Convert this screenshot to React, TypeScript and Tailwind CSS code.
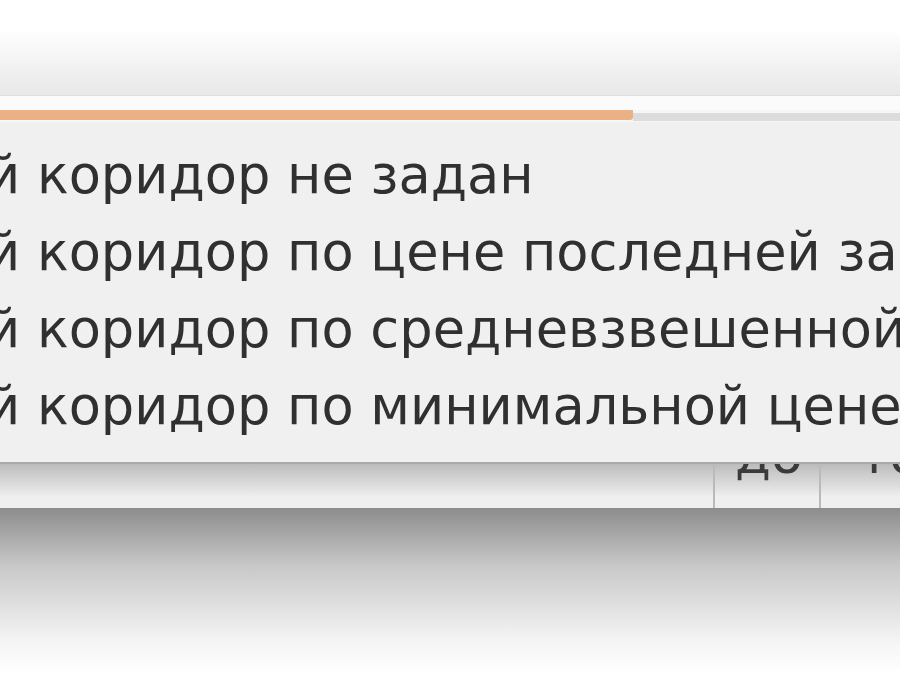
const items = [
  'й коридор не задан',
  'й коридор по цене последней за',
  'й коридор по средневзвешенной',
  'й коридор по минимальной цене',
]

function MenuRow({ label }: { label: string }) {
  return (
    <div className="h-[77px] flex items-center whitespace-nowrap">
      <span className="-ml-[14px] text-[52.6px] leading-[77px] text-[#303030] blur-[0.5px]">{label}</span>
    </div>
  )
}

export default function App() {
  return (
    <div
      className="w-[900px] h-[700px] overflow-hidden bg-white flex flex-col"
      style={{ fontFamily: '"DejaVu Sans", "Liberation Sans", sans-serif' }}
    >
      {/* window toolbar area above the combo */}
      <div className="h-[95px] bg-[linear-gradient(to_bottom,#ffffff_30%,#e8e8e8)]" />
      <div className="h-px bg-[#dedede]" />
      <div className="h-[14px] bg-[#fbfbfb]" />

      {/* combo box focus edge */}
      <div className="h-[12px] flex bg-[#f6f6f6]">
        <div className="w-[633px] h-[10px] bg-[#e9b185] rounded-br-[3px]" />
        <div className="flex-1 mt-[3px] h-[8px] bg-[#dcdcdc]" />
      </div>

      {/* popup menu */}
      <div className="h-[340px] bg-[#f0f0f0] pt-[14px] overflow-hidden">
        {items.map(label => (
          <MenuRow key={label} label={label} />
        ))}
      </div>
      <div className="h-[2px] bg-[#a9a9a9]" />

      {/* table row under the menu, in its shadow */}
      <div className="h-[44px] flex bg-[linear-gradient(to_bottom,#bcbcbc,#efefef_75%)] overflow-hidden">
        <div className="w-[713px]" />
        <div className="w-[2px] bg-[#bababa]" />
        <div className="w-[104px] overflow-hidden pl-[20px]">
          <div className="-mt-[35px] text-[52px] leading-[52px] text-[#3a3a3a] blur-[0.5px]">до</div>
        </div>
        <div className="w-[2px] bg-[#bababa]" />
        <div className="flex-1 overflow-hidden pl-[38px]">
          <div className="-mt-[35px] text-[52px] leading-[52px] text-[#3a3a3a] blur-[0.5px] whitespace-nowrap">то</div>
        </div>
      </div>

      {/* window drop shadow */}
      <div className="h-[165px] bg-[linear-gradient(to_bottom,#8c8c8c,#c8c8c8_35%,#f4f4f4_80%,#ffffff)]" />
      <div className="flex-1 bg-white" />
    </div>
  )
}
